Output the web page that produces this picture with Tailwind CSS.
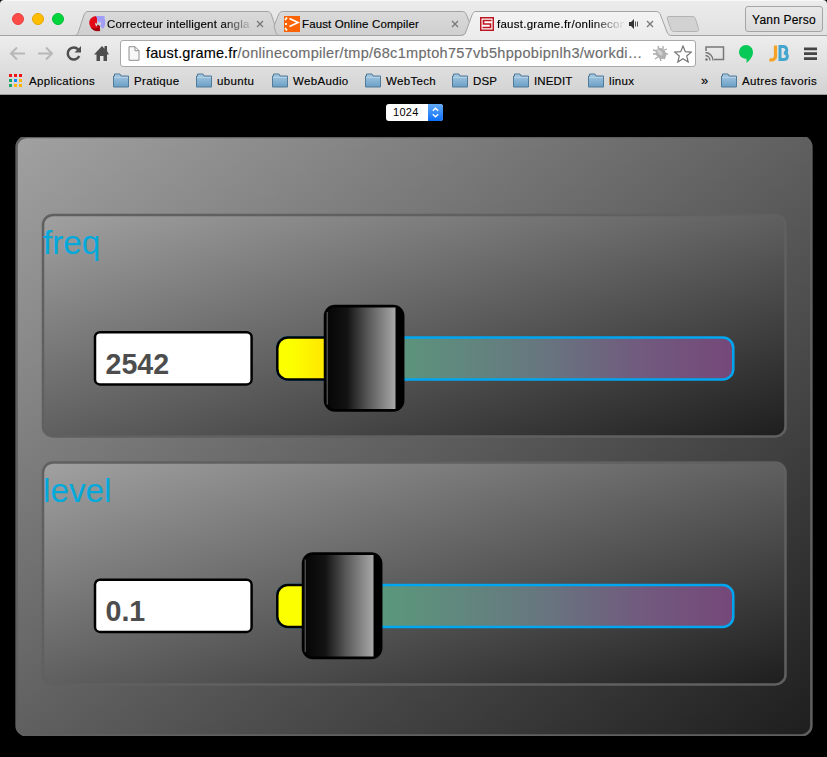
<!DOCTYPE html>
<html lang="fr">
<head>
<meta charset="utf-8">
<title>Faust</title>
<script src="https://cdn.jsdelivr.net/npm/@tailwindcss/browser@4"></script>
</head>
<body class="w-[827px] h-[757px] overflow-hidden bg-black font-['Liberation_Sans',Arial,sans-serif] text-black">
<svg class="absolute w-0 h-0" aria-hidden="true">
  <defs>
    <linearGradient id="panel" x1="0" y1="0" x2="1" y2="1"><stop offset="0" stop-color="#a1a1a1"/><stop offset="1" stop-color="#1e1e1e"/></linearGradient>
    <linearGradient id="track" x1="0" y1="0" x2="1" y2="0"><stop offset="0" stop-color="#56ac7c"/><stop offset=".25" stop-color="#5b967c"/><stop offset=".58" stop-color="#67767f"/><stop offset=".8" stop-color="#715a7e"/><stop offset="1" stop-color="#754879"/></linearGradient>
    <linearGradient id="fill" gradientUnits="userSpaceOnUse" x1="0" y1="0" x2="60" y2="0"><stop offset=".25" stop-color="#fcff00"/><stop offset="1" stop-color="#ffdf00"/></linearGradient>
    <linearGradient id="thumb" x1="0" y1="0" x2="1" y2="0"><stop offset="0" stop-color="#050505"/><stop offset=".3" stop-color="#131313"/><stop offset=".6" stop-color="#585858"/><stop offset="1" stop-color="#a8a8a8"/></linearGradient>
    <linearGradient id="folder" x1="0" y1="0" x2="0" y2="1"><stop offset="0" stop-color="#a9cbe2"/><stop offset="1" stop-color="#6a9fc5"/></linearGradient>
    <linearGradient id="tab" x1="0" y1="0" x2="0" y2="1"><stop offset="0" stop-color="#dadada"/><stop offset="1" stop-color="#cfcfcf"/></linearGradient>
    <symbol id="dir" viewBox="0 0 17 15"><path d="M.5 14V3h1V1h5.500l1 2h7.500v11z" fill="url(#folder)" stroke="#527b99"/><path d="M1 4.500h14" stroke="#b4d3e8"/></symbol>
    <symbol id="x" viewBox="0 0 8 8"><path d="M1 1l6 6M7 1L1 7" stroke="#777" stroke-width="1.300"/></symbol>
  </defs>
</svg>

<header class="relative h-[95px] rounded-t-[4px] bg-linear-to-b from-[#ececec] to-[#cfcfcf] border-b border-[#9c9c9c]">
  <svg class="absolute inset-0" width="827" height="95" viewBox="0 0 827 95" fill="none">
    <defs><linearGradient id="bar" gradientUnits="userSpaceOnUse" x1="0" y1="11" x2="0" y2="95"><stop offset="0" stop-color="#f3f3f3"/><stop offset=".35" stop-color="#ebebeb"/><stop offset="1" stop-color="#d2d2d2"/></linearGradient></defs>
    <path d="M4 .5H823" stroke="#f8f8f8"/>
    <path d="M74 35.500c3 0 3.500-1 4.500-4L84 15c1-2.500 2-3.500 4-3.500H267c2.500 0 3.500 1 4.500 3.500L277 31.500c1 2.500 2 4 5 4z" fill="url(#tab)" stroke="#a3a3a3"/>
    <path d="M280 35.500c-3 0-3.500-1-4.500-4L274 26l4.500-11c1-2.500 2-3.500 4-3.500H462c2.500 0 3.500 1 4.500 3.500L470 23.500l-4 8c-1 3-2 4-5 4z" fill="url(#tab)" stroke="#a3a3a3"/>
    <path d="M0 35.500H460c4 0 5-1 6-4L472 15c1-2.500 2-3.500 4-3.500H656c2.500 0 3.500 1 4.500 3.500l6.500 17c1 2.500 2 3.500 5 3.500H827V94H0z" fill="url(#bar)"/>
    <path d="M0 35.500H460c4 0 5-1 6-4L472 15c1-2.500 2-3.500 4-3.500H656c2.500 0 3.500 1 4.500 3.500l6.500 17c1 2.500 2 3.500 5 3.500H827" stroke="#a3a3a3"/>
    <path d="M669 16.500h23c2 0 2.800.5 3.400 2l3 10c.7 2-.2 3-2 3h-22c-2 0-2.800-.5-3.400-2l-3.600-10.500c-.6-1.500 0-2.500 1.600-2.500z" fill="#d2d2d2" stroke="#b3b3b3"/>
  </svg>

  <div class="relative flex h-[36px] items-start [-webkit-text-stroke:0.15px]">
    <div class="flex gap-[8px] pl-[12px] pt-[13px] w-[89px] shrink-0">
      <span class="size-[12px] rounded-full bg-[#ff4b47] border border-[#e84240]"></span>
      <span class="size-[12px] rounded-full bg-[#ffbd00] border border-[#e5a800]"></span>
      <span class="size-[12px] rounded-full bg-[#00d53c] border border-[#00bd35]"></span>
    </div>
    <div class="flex w-[195px] shrink-0 pt-[15px]">
      <svg width="17" height="17" viewBox="0 0 17 17"><path d="M6 1h9.500v1.500C17 7 16.500 11 14 14l-3-3c1.500-2 1.500-3 0-4.500L9.500 8z" fill="#a39ef5"/><path d="M2 12c2 4 6 5 9.500 3.800L10.500 17l.5-.8V11L8.500 9.500 8 12z" fill="#8d0008"/><path d="M6.500 1C1 2-1 7 1 11c1.500 3.500 5 5.200 9.500 4.800V11.500c-3.500.5-5-1.500-4-4L8 9V3z" fill="#e30a16"/><path d="M1.500 12c2 3.500 5.500 4.300 9 3.800v-3.500C7 13.500 4 13.500 1.500 12z" fill="#a3000b"/></svg>
      <div class="ml-[1px] w-[147px] overflow-hidden whitespace-nowrap text-[11.5px] leading-[18px] tracking-[0.18px] bg-linear-to-r from-black from-78% to-black/10 to-98% bg-clip-text text-transparent">Correcteur intelligent angla</div>
      <svg class="ml-[2px] mt-[5px]" width="8" height="8"><use href="#x"/></svg>
    </div>
    <div class="flex w-[195px] shrink-0 pt-[15px]">
      <svg class="mt-[1px]" width="16" height="16" viewBox="0 0 16 16"><rect width="16" height="16" fill="#fb6304"/><path d="M5.500 2.500L14 6.500l-8.500 4" fill="none" stroke="#fff" stroke-width="1.700"/><path d="M1 4l2-2.500M2 7v2M1 12l2 2.500" stroke="#fff" stroke-width="1.800"/></svg>
      <div class="ml-[2px] w-[147px] whitespace-nowrap text-[11.5px] leading-[18px] tracking-[0.12px]">Faust Online Compiler</div>
      <svg class="ml-[2px] mt-[5px]" width="8" height="8"><use href="#x"/></svg>
    </div>
    <div class="flex w-[195px] shrink-0 pt-[15px]">
      <svg class="mt-[2px] ml-[1px]" width="14" height="14" viewBox="0 0 14 14"><rect x=".75" y=".75" width="12.500" height="12.500" fill="#fff" stroke="#bd1421" stroke-width="1.500"/><path d="M11.500 3.500h-8V7h7v3.500H2.500" fill="none" stroke="#bd1421" stroke-width="1.700"/></svg>
      <div class="ml-[3px] w-[127px] overflow-hidden whitespace-nowrap text-[11.5px] leading-[18px] tracking-[0.25px] bg-linear-to-r from-black from-75% to-black/10 to-98% bg-clip-text text-transparent">faust.grame.fr/onlinecon</div>
      <svg class="ml-[5px] mt-[4px]" width="11" height="10" viewBox="0 0 11 10"><path d="M0 3h2l3-3v10L2 7H0z" fill="#333"/><path d="M6.500 2.500v5M8.500 2.500v5" stroke="#555" fill="none"/></svg>
      <svg class="ml-[6px] mt-[5px]" width="8" height="8"><use href="#x"/></svg>
    </div>
    <div class="ml-[71px] mt-[6px] h-[26px] w-[78px] shrink-0 rounded-[3px] border border-[#a5a5a5] bg-linear-to-b from-[#e9e9e9] to-[#dadada] text-center text-[12px] leading-[26px] tracking-[0.2px] whitespace-nowrap">Yann Perso</div>
  </div>

  <div class="relative flex h-[35px] items-center">
    <svg class="shrink-0" width="120" height="35" viewBox="0 0 120 35" fill="none"><path d="M25 17.500H11M17 11.500l-6 6 6 6M38 17.500h14M46 11.500l6 6-6 6" stroke="#b7b7b7" stroke-width="2"/><path d="M78.200 13.500a6 6 0 1 0 1 6.500" stroke="#4e4e4e" stroke-width="2.500"/><path d="M81 10v6.500h-6.500z" fill="#4e4e4e"/><path d="M94 18.500l8-8.500 2.500 2.700V10H107v5l2 3.500h-2V25h-3.500v-5h-3.500v5H96.500v-6.500z" fill="#4e4e4e"/></svg>
    <div class="flex h-[27px] w-[576px] shrink-0 items-center rounded-[3px] border border-[#a9a9a9] bg-white">
      <svg class="ml-[7px] shrink-0" width="12" height="15" viewBox="0 0 12 15"><path d="M1 .7h6l4 4v9.600H1zM7 .7v4h4" fill="#f7f7f7" stroke="#8e8e8e"/></svg>
      <div class="ml-[6px] w-[506px] whitespace-nowrap text-[14.5px] tracking-[0.31px] text-[#6c6c6c] leading-[29px] [-webkit-text-stroke:0.15px]"><span class="text-black tracking-[0.14px]">faust.grame.fr</span>/onlinecompiler/tmp/68c1mptoh757vb5hppobipnlh3/workdi…</div>
      <svg class="shrink-0" width="17" height="17" viewBox="0 0 17 17"><path d="M1 5l4 1M1 9h3M3 14l3-2M6 1l1 3M11 1v3M15 4l-3 1M16 9h-3M13 14l-2-2M9 16l-1-3" stroke="#aaa" stroke-width="1.300"/><ellipse cx="9" cy="8.500" rx="4.800" ry="6" transform="rotate(-40 9 8.500)" fill="#b0b0b0"/><ellipse cx="7.800" cy="7.500" rx="2" ry="3.500" transform="rotate(-40 7.800 7.500)" fill="#cfcfcf"/></svg>
      <svg class="ml-[5px] shrink-0" width="18" height="18" viewBox="0 0 18 18"><path d="M9 1l2.300 5.700 6 .4-4.600 3.900 1.500 6L9 13.700 3.800 17l1.500-6L.7 7.100l6-.4z" fill="#fff" stroke="#777" stroke-width="1.200"/></svg>
    </div>
    <svg class="shrink-0" width="131" height="35" viewBox="696 36 131 35" fill="none"><path d="M706 51v-4h17.500v12.500H714" stroke="#777" stroke-width="1.500"/><path d="M705.500 52.500a8 8 0 0 1 7.500 8M705.500 55.500a5 5 0 0 1 4.500 5" stroke="#777" stroke-width="1.400"/><circle cx="706.500" cy="59.500" r="1.300" fill="#777"/><path d="M746 45a7 7 0 0 1 7 7c0 4.500-3 8-6.500 11v-4.200c-4 0-7.500-2.500-7.500-6.800a7 7 0 0 1 7-7z" fill="#07c957"/><path d="M775.500 45.500v10.500c0 3.500-3.500 4.500-6 3.500" stroke="#f5a326" stroke-width="3.300"/><path d="M780 46.500v13h3.500c5 0 5-6 .5-6.500 4-.5 3.500-6.500-1-6.500z" stroke="#43a6cf" stroke-width="3"/><path d="M804 48.800h13M804 53.700h13M804 58.600h13" stroke="#444" stroke-width="2.700"/></svg>
  </div>

  <nav class="relative flex h-[20px] items-center text-[11.5px] leading-[20px] tracking-[0.34px] whitespace-nowrap [-webkit-text-stroke:0.15px]">
    <div class="flex w-[113px] shrink-0 items-center pl-[9px]"><svg class="mr-[7px] -mt-[2px]" width="13" height="13"><path d="M0 0h3v3H0zM5 0h3v3H5zM10 0h3v3h-3z" fill="#f01616"/><path d="M0 5h3v3H0zM0 10h3v3H0z" fill="#16a765"/><path d="M5 5h3v3H5z" fill="#168aff"/><path d="M10 5h3v3h-3zM5 10h3v3H5zM10 10h3v3h-3z" fill="#ffb400"/></svg>Applications</div>
    <div class="flex w-[83px] shrink-0 items-center"><svg class="mr-[4px] -mt-[2px]" width="17" height="15"><use href="#dir"/></svg>Pratique</div>
    <div class="flex w-[76px] shrink-0 items-center"><svg class="mr-[4px] -mt-[2px]" width="17" height="15"><use href="#dir"/></svg>ubuntu</div>
    <div class="flex w-[93px] shrink-0 items-center"><svg class="mr-[4px] -mt-[2px]" width="17" height="15"><use href="#dir"/></svg>WebAudio</div>
    <div class="flex w-[87px] shrink-0 items-center"><svg class="mr-[4px] -mt-[2px]" width="17" height="15"><use href="#dir"/></svg>WebTech</div>
    <div class="flex w-[61px] shrink-0 items-center tracking-[0.1px]"><svg class="mr-[4px] -mt-[2px]" width="17" height="15"><use href="#dir"/></svg>DSP</div>
    <div class="flex w-[75px] shrink-0 items-center tracking-[0.1px]"><svg class="mr-[4px] -mt-[2px]" width="17" height="15"><use href="#dir"/></svg>INEDIT</div>
    <div class="flex w-[113px] shrink-0 items-center"><svg class="mr-[4px] -mt-[2px]" width="17" height="15"><use href="#dir"/></svg>linux</div>
    <div class="w-[20px] shrink-0 text-[13px]">»</div>
    <div class="flex shrink-0 items-center"><svg class="mr-[4px] -mt-[2px]" width="17" height="15"><use href="#dir"/></svg>Autres favoris</div>
  </nav>
</header>

<main class="h-[662px]">
  <div class="flex h-[42px] justify-center pt-[9px] pl-[2px]">
    <div class="flex h-[17px] w-[57px] overflow-hidden rounded-[3px] bg-white">
      <span class="w-[42px] pl-[7px] text-[11px] leading-[17px] tracking-[0.3px]">1024</span>
      <svg width="15" height="17" viewBox="0 0 15 17"><defs><linearGradient id="sel" x1="0" y1="0" x2="0" y2="1"><stop stop-color="#64abf8"/><stop offset="1" stop-color="#0a6ff8"/></linearGradient></defs><rect width="15" height="17" fill="url(#sel)"/><path d="M4.800 6.800l2.700-2.600 2.700 2.600M4.800 10.200l2.700 2.600 2.700-2.600" fill="none" stroke="#fff" stroke-width="1.300"/></svg>
    </div>
  </div>

  <div class="relative ml-[15px] flex h-[599px] w-[798px] flex-col gap-[23px] pl-[27px] pt-[77px]">
    <svg class="absolute inset-0" width="798" height="599"><rect x="1.600" y="-.1" width="794.800" height="598.500" rx="10" fill="url(#panel)" stroke="#606060" stroke-width="2.500"/></svg>

    <section class="relative h-[224px] w-[744px]">
      <svg class="absolute inset-0 overflow-visible" width="744" height="224"><rect x="1" y="1" width="742.500" height="221.400" rx="10" fill="url(#panel)" stroke="#606060" stroke-width="2.500"/></svg>
      <h2 class="relative h-[117px] pl-[1px] pt-[10px] text-[33.3px] leading-[38px] text-[#00a9dc]">freq</h2>
      <div class="relative flex pl-[52px]">
        <div class="relative h-[55px] w-[182px]">
          <svg class="absolute inset-0 overflow-visible" width="160" height="55"><rect x="1" y="1.200" width="156.600" height="52.200" rx="5" fill="#fff" stroke="#000" stroke-width="2.500"/></svg>
          <span class="relative block pl-[11.5px] pt-[17px] text-[28.6px] font-bold leading-[32px] text-[#4d4d4d]">2542</span>
        </div>
        <svg class="overflow-visible" width="458" height="55" viewBox="0 0 458 55">
          <rect x="1.300" y="6.500" width="456" height="42" rx="10.500" fill="url(#track)" stroke="#00a6f0" stroke-width="2.500"/>
          <path d="M60 6.500H11.800a10.500 10.500 0 0 0-10.500 10.500v21a10.500 10.500 0 0 0 10.500 10.500H60z" fill="url(#fill)" stroke="#000" stroke-width="2.500"/>
          <g transform="translate(48.500 -25)"><rect x=".5" y="0" width="78.200" height="104.500" rx="10" fill="#000" stroke="#000" stroke-width="2.500"/><path d="M71 1.600V103H10q-8-.5-8-9V10q0-8 8-8.400z" fill="url(#thumb)"/><path d="M2.700 6v92.500" stroke="#686868" stroke-width="1"/></g>
        </svg>
      </div>
    </section>

    <section class="relative h-[224px] w-[744px]">
      <svg class="absolute inset-0 overflow-visible" width="744" height="224"><rect x="1" y="1.400" width="742.500" height="222" rx="10" fill="url(#panel)" stroke="#606060" stroke-width="2.500"/></svg>
      <h2 class="relative h-[117px] pl-[1px] pt-[11px] text-[33.3px] leading-[38px] text-[#00a9dc]">level</h2>
      <div class="relative flex pl-[52px]">
        <div class="relative h-[55px] w-[182px]">
          <svg class="absolute inset-0 overflow-visible" width="160" height="55"><rect x="1" y="1.700" width="156.600" height="52.200" rx="5" fill="#fff" stroke="#000" stroke-width="2.500"/></svg>
          <span class="relative block pl-[11.5px] pt-[17px] text-[28.6px] font-bold leading-[32px] text-[#4d4d4d]">0.1</span>
        </div>
        <svg class="overflow-visible" width="458" height="55" viewBox="0 0 458 55">
          <rect x="1.300" y="7" width="456" height="42" rx="10.500" fill="url(#track)" stroke="#00a6f0" stroke-width="2.500"/>
          <path d="M40 7H11.800a10.500 10.500 0 0 0-10.500 10.500v21a10.500 10.500 0 0 0 10.500 10.500H40z" fill="#fcff00" stroke="#000" stroke-width="2.500"/>
          <g transform="translate(26.500 -24.500)"><rect x=".5" y="0" width="78.200" height="104.500" rx="10" fill="#000" stroke="#000" stroke-width="2.500"/><path d="M71 1.600V103H10q-8-.5-8-9V10q0-8 8-8.400z" fill="url(#thumb)"/><path d="M2.700 6v92.500" stroke="#686868" stroke-width="1"/></g>
        </svg>
      </div>
    </section>
  </div>
</main>
</body>
</html>
